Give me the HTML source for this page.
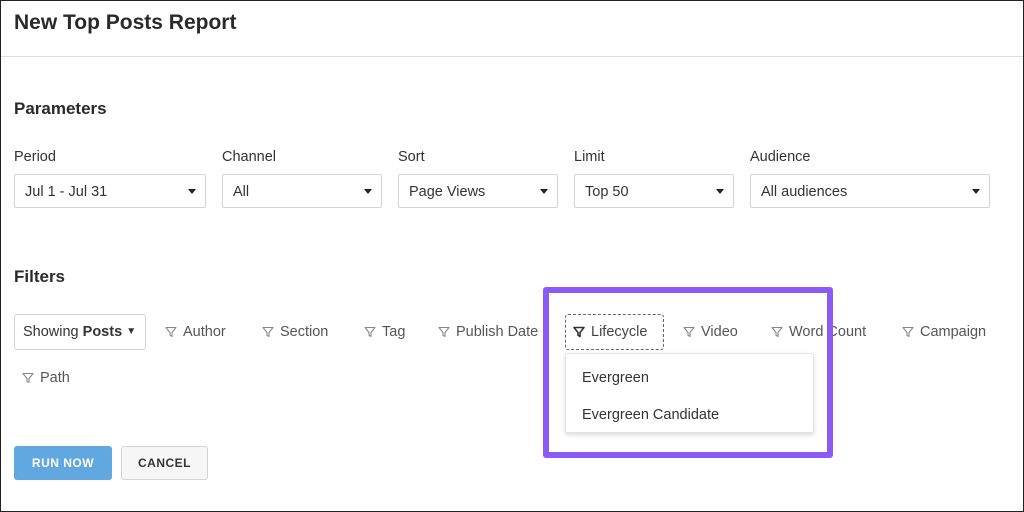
<!DOCTYPE html>
<html><head><style>
*{box-sizing:border-box;margin:0;padding:0}
body{width:1024px;height:512px;background:#fff;font-family:"Liberation Sans",sans-serif;color:#333;position:relative;overflow:hidden;}
.frame{position:absolute;left:0;top:0;width:1024px;height:512px;border:1px solid #222;pointer-events:none}
.a{position:absolute}
h1{position:absolute;left:14px;top:11px;font-size:21px;font-weight:600;color:#2a2a2a}
.hr{position:absolute;left:0;right:0;top:56px;border-top:1px solid #ddd}
h2{position:absolute;font-size:17px;font-weight:bold;color:#2a2a2a}
.lbl{position:absolute;top:149px;font-size:14.5px;color:#333}
.sel{position:absolute;top:174px;height:34px;border:1px solid #d5d5d5;border-radius:2px;font-size:14.5px;padding:9px 10px;color:#333}
.sel:after{content:"";position:absolute;right:9px;top:14px;border:4px solid transparent;border-top:5px solid #222;border-bottom:0}
.f{position:absolute;font-size:14.5px;color:#555;display:flex;align-items:center;gap:6px}
.f svg{width:12px;height:12px}
</style></head><body>
<h1>New Top Posts Report</h1>
<div class="hr"></div>
<h2 style="left:14px;top:99px">Parameters</h2>
<div class="lbl" style="left:14px">Period</div>
<div class="lbl" style="left:222px">Channel</div>
<div class="lbl" style="left:398px">Sort</div>
<div class="lbl" style="left:574px">Limit</div>
<div class="lbl" style="left:750px">Audience</div>
<div class="sel" style="left:14px;width:192px">Jul 1 - Jul 31</div>
<div class="sel" style="left:222px;width:160px">All</div>
<div class="sel" style="left:398px;width:160px">Page Views</div>
<div class="sel" style="left:574px;width:160px">Top 50</div>
<div class="sel" style="left:750px;width:240px">All audiences</div>
<h2 style="left:14px;top:267px">Filters</h2>
<div class="a" style="left:14px;top:314px;width:132px;height:36px;border:1px solid #d5d5d5;border-radius:3px;font-size:14.5px;padding:9px 8px;color:#333">Showing <b>Posts</b> <span style="font-size:10px;position:relative;top:-2px">▼</span></div>
<svg width="0" height="0" style="position:absolute"><defs><symbol id="fn" viewBox="0 0 12 12"><path d="M1 1.5h10L7 6.5v4l-2-1.2V6.5z" fill="none" stroke="#888" stroke-width="1.1" stroke-linejoin="round"/></symbol></defs></svg>
<div class="f" style="left:165px;top:324px"><svg><use href="#fn"/></svg>Author</div>
<div class="f" style="left:262px;top:324px"><svg><use href="#fn"/></svg>Section</div>
<div class="f" style="left:364px;top:324px"><svg><use href="#fn"/></svg>Tag</div>
<div class="f" style="left:438px;top:324px"><svg><use href="#fn"/></svg>Publish Date</div>
<div class="f" style="left:683px;top:324px"><svg><use href="#fn"/></svg>Video</div>
<div class="f" style="left:771px;top:324px"><svg><use href="#fn"/></svg>Word Count</div>
<div class="f" style="left:902px;top:324px"><svg><use href="#fn"/></svg>Campaign</div>
<div class="f" style="left:22px;top:370px"><svg><use href="#fn"/></svg>Path</div>
<div class="a" style="left:565px;top:314px;width:99px;height:36px;border:1px dashed #666;border-radius:3px"></div>
<div class="f" style="left:573px;top:324px;color:#444"><svg viewBox="0 0 12 12"><path d="M1 1.5h10L7 6.5v4l-2-1.2V6.5z" fill="none" stroke="#333" stroke-width="1.6" stroke-linejoin="round"/></svg>Lifecycle</div>
<div class="a" style="left:565px;top:353px;width:249px;height:80px;background:#fff;border:1px solid #e3e3e3;border-radius:2px;box-shadow:0 2px 5px rgba(0,0,0,.15);font-size:14.5px;color:#333">
<div class="a" style="left:16px;top:16px">Evergreen</div>
<div class="a" style="left:16px;top:53px">Evergreen Candidate</div>
</div>
<div class="a" style="left:543px;top:287px;width:290px;height:171px;border:6px solid #8a5cf5;border-radius:3px"></div>
<div class="a" style="left:14px;top:446px;width:98px;height:34px;background:#62a8e0;border-radius:3px;color:#fff;font-size:12px;font-weight:bold;letter-spacing:.5px;text-align:center;line-height:34px">RUN NOW</div>
<div class="a" style="left:121px;top:446px;width:87px;height:34px;background:#f7f7f8;border:1px solid #d5d5d5;border-radius:3px;color:#333;font-size:12px;font-weight:bold;letter-spacing:.5px;text-align:center;line-height:32px">CANCEL</div>
<div class="frame"></div>
</body></html>
